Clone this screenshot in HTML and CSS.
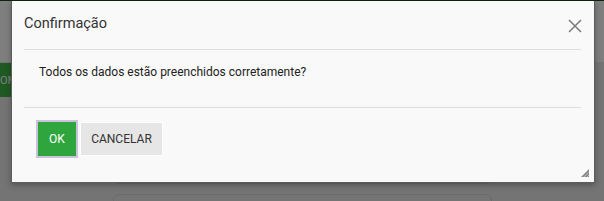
FILE: index.html
```html
<!DOCTYPE html>
<html lang="pt-BR">

<head>
    <meta charset="UTF-8">
    <meta name="viewport" content="width=device-width, initial-scale=1.0">
    <title>Confirmação</title>
    <link rel="stylesheet" href="styles.css">
</head>

<body>
    <div class="topline"></div>
    <div class="stage">
        <!-- page behind the modal -->
        <div class="page">
            <div class="page-header"></div>
            <div class="toolbar">
                <button class="btn-green">OM</button>
            </div>
            <div class="content">
                <div class="card card-top"></div>
                <div class="card"></div>
            </div>
        </div>

        <div class="backdrop"></div>

        <div class="dialog">
            <div class="dlg-head">
                <span class="dlg-title">Confirmação</span>
                <button class="dlg-close" aria-label="Fechar">
                    <svg width="14" height="14" viewBox="0 0 14 14">
                        <path d="M1 1 L13 13 M13 1 L1 13" stroke="#7a7a7a" stroke-width="1.5" fill="none" />
                    </svg>
                </button>
            </div>
            <div class="dlg-body">
                Todos os dados estão preenchidos corretamente?
            </div>
            <div class="dlg-foot">
                <button class="btn btn-ok">OK</button>
                <button class="btn btn-cancel">CANCELAR</button>
            </div>
            <svg class="resize" width="10" height="10" viewBox="0 0 10 10">
                <path d="M9 1 L9 9 L1 9 Z" fill="#8a8a8a" />
                <path d="M9 4 L4 9 M9 7 L7 9" stroke="#bdbdbd" stroke-width="0.8" />
            </svg>
        </div>
    </div>
</body>

</html>
```

FILE: styles.css
```css
* {
    box-sizing: border-box;
}

html,
body {
    height: 201px;
}

body {
    margin: 0;
    font-family: Roboto, "Liberation Sans", sans-serif;
    background-color: #e8e8e8;
    overflow: hidden;
}

.topline {
    height: 1px;
    background: #0b2410;
}

.stage {
    position: relative;
    height: 200px;
    overflow: hidden;
}

/* page under the overlay */
.page-header {
    height: 61px;
    background: #ffffff;
}

.toolbar {
    height: 35px;
    padding-top: 1px;
}

.btn-green {
    height: 34px;
    width: 60px;
    border: none;
    background: #3eb444;
    color: #ffffff;
    font-family: Roboto, sans-serif;
    font-size: 11px;
    text-align: left;
    padding: 0;
}

.content {
    padding: 0 112px 0 113px;
}

.card {
    height: 40px;
    border: 1px solid #d4d4d4;
    border-radius: 6px;
    margin-bottom: 10px;
}

.card-top {
    margin-top: -40px;
    height: 127px;
}

.backdrop {
    position: absolute;
    inset: 0;
    background: rgba(0, 0, 0, 0.5);
}

/* modal */
.dialog {
    position: absolute;
    left: 11px;
    top: 0;
    width: 584px;
    height: 182px;
    background: #f9f9f9;
    border: 1px solid #5c5c5c;
    border-top: none;
    box-shadow: 0 2px 6px rgba(0, 0, 0, 0.3);
}

.dlg-head {
    margin: 0 13px 0 12px;
    height: 49px;
    border-bottom: 1px solid #dedede;
    display: flex;
    align-items: center;
    justify-content: space-between;
    padding-bottom: 3px;
}

.dlg-title {
    font-size: 14.5px;
    color: #333333;
}

.dlg-close {
    border: none;
    background: none;
    padding: 0;
    margin-right: -1px;
    margin-top: 4px;
    width: 14px;
    height: 14px;
    cursor: pointer;
}

.dlg-body {
    margin: 0 13px 0 12px;
    height: 58px;
    border-bottom: 1px solid #dedede;
    padding: 15px 0 0 15px;
    font-size: 12px;
    color: #222222;
}

.dlg-foot {
    display: flex;
    gap: 4px;
    padding: 14px 26px;
}

.btn {
    height: 34px;
    font-family: Roboto, sans-serif;
    font-size: 12px;
    cursor: pointer;
    padding: 0;
}

.btn-ok {
    width: 38px;
    background: #2ea63d;
    color: #ffffff;
    border: none;
    outline: 2px solid #c9c2dc;
}

.btn-cancel {
    width: 83px;
    background: #e6e6e6;
    color: #333333;
    border: 1px solid #ffffff;
}

.resize {
    position: absolute;
    right: 4px;
    bottom: 4px;
}
```
